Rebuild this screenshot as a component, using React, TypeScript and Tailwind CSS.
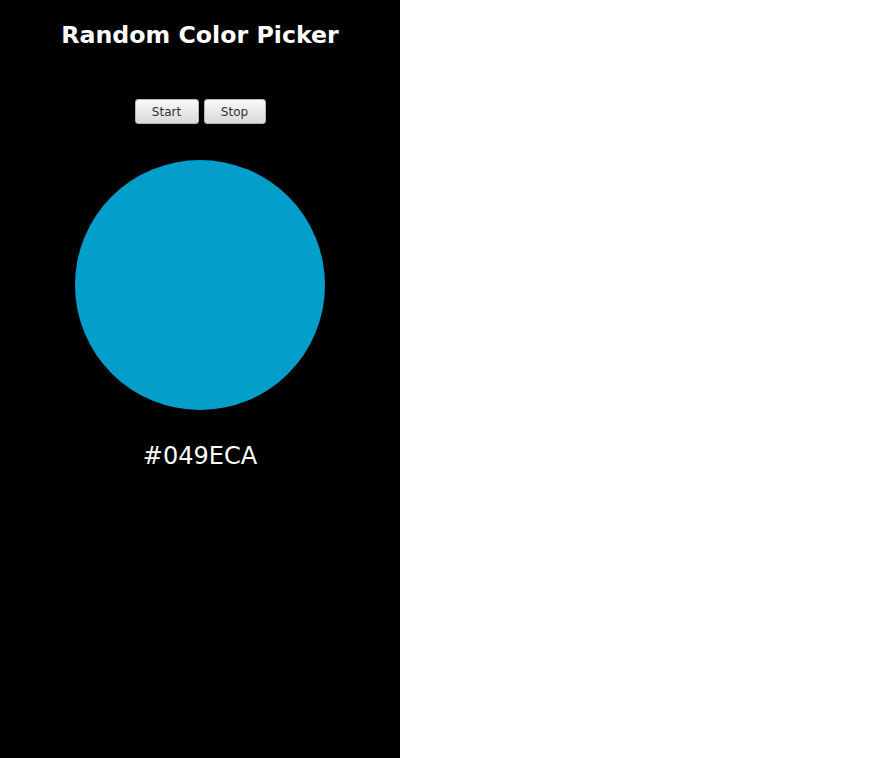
export default function App() {
  return (
    <div className="flex min-h-[758px] bg-white" style={{ fontFamily: '"DejaVu Sans", sans-serif' }}>
      <div className="w-[400px] h-[758px] bg-black flex flex-col items-center">
        <h1 className="mt-[21px] text-[23.7px] leading-[28px] font-bold text-white">Random Color Picker</h1>
        <div className="mt-[50px] flex gap-[5px]">
          <button className="w-[64px] h-[25px] text-[12px] text-[#333] rounded-[3px] border border-[#b5b5b5] bg-gradient-to-b from-[#fafafa] to-[#d9d9d9]">Start</button>
          <button className="w-[62px] h-[25px] text-[12px] text-[#333] rounded-[3px] border border-[#b5b5b5] bg-gradient-to-b from-[#fafafa] to-[#d9d9d9]">Stop</button>
        </div>
        <div className="mt-[36px] w-[250px] h-[250px] rounded-full bg-[#049ECA]"></div>
        <div className="mt-[32px] text-[24px] leading-[28px] text-white">#049ECA</div>
      </div>
    </div>
  );
}
